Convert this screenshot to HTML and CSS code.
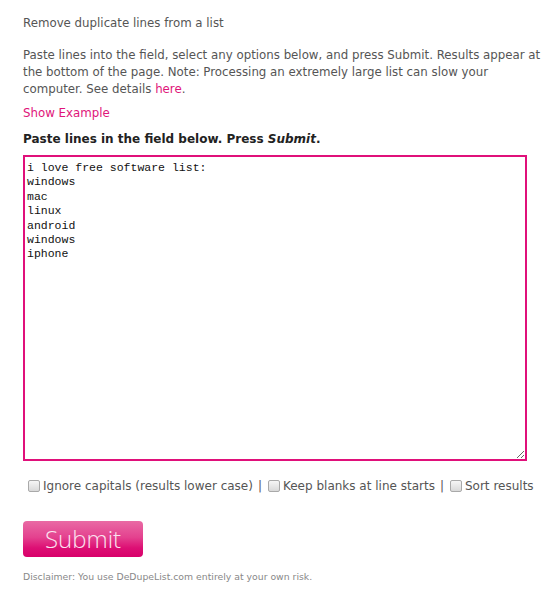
FILE: index.html
```html
<!DOCTYPE html>
<html>
<head>
<meta charset="utf-8">
<link rel="stylesheet" href="styles.css">
</head>
<body>
<div class="page">
  <h1 class="title">Remove duplicate lines from a list</h1>
  <p class="intro">Paste lines into the field, select any options below, and press Submit. Results appear at the bottom of the page. Note: Processing an extremely large list can slow your computer. See details <a href="#" class="link">here</a>.</p>
  <p class="example"><a href="#" class="link">Show Example</a></p>
  <p class="heading">Paste lines in the field below. Press <em>Submit</em>.</p>
  <textarea class="field" spellcheck="false">i love free software list:
windows
mac
linux
android
windows
iphone</textarea>
  <div class="options">
    <label class="opt"><input type="checkbox" class="box">Ignore capitals (results lower case)</label><span class="sep">|</span>
    <label class="opt"><input type="checkbox" class="box">Keep blanks at line starts</label><span class="sep">|</span>
    <label class="opt"><input type="checkbox" class="box">Sort results</label>
  </div>
  <button class="submit">Submit</button>
  <p class="disclaimer">Disclaimer: You use DeDupeList.com entirely at your own risk.</p>
</div>
</body>
</html>
```
FILE: styles.css
```css
html, body {
  margin: 0;
  padding: 0;
  background: #ffffff;
}
body {
  font-family: "DejaVu Sans", Verdana, sans-serif;
  font-size: 11.8px;
  color: #555555;
}
.page {
  box-sizing: border-box;
  width: 550px;
  padding: 15px 0 0 23px;
}
.title {
  margin: 0;
  font-size: 11.8px;
  font-weight: normal;
  line-height: 17px;
  color: #555555;
}
.intro {
  margin: 15px 0 0 0;
  line-height: 17px;
}
.link {
  color: #e0157a;
  text-decoration: none;
}
.example {
  margin: 7px 0 0 0;
  line-height: 17px;
}
.heading {
  margin: 9px 0 0 0;
  font-weight: bold;
  font-size: 12px;
  color: #222222;
  line-height: 17px;
}
.heading em {
  font-style: italic;
}
.field {
  display: block;
  box-sizing: border-box;
  margin: 7px 0 0 0;
  width: 504px;
  height: 306px;
  border: 2px solid #e0107a;
  padding: 4px 2px 2px 2px;
  font-family: "Liberation Mono", "Courier New", monospace;
  font-size: 11.5px;
  line-height: 14.4px;
  color: #111111;
  outline: none;
  background: #ffffff;
  resize: both;
}
.options {
  display: flex;
  align-items: center;
  white-space: nowrap;
  margin: 17px 0 0 5px;
  font-size: 12px;
  line-height: 17px;
  color: #555555;
}
.opt {
  display: flex;
  align-items: center;
}
.box {
  appearance: none;
  -webkit-appearance: none;
  box-sizing: border-box;
  margin: 0 3px 1px 0;
  width: 12px;
  height: 12px;
  border: 1px solid #a9a9a9;
  border-radius: 2px;
  background: linear-gradient(to bottom, #f6f6f6, #d9d9d9);
}
.sep {
  margin: 0 6px 0 5px;
}
.submit {
  display: block;
  margin: 26px 0 0 0;
  width: 120px;
  height: 36px;
  border: none;
  border-radius: 4px;
  background: linear-gradient(to bottom, #e96aa4 0%, #e4428f 45%, #dd0f74 75%, #d8006a 100%);
  color: #fbe3ef;
  font-family: "Open Sans", sans-serif;
  font-weight: 300;
  font-size: 24px;
  padding: 0 0 2px 0;
  text-align: center;
}
.disclaimer {
  margin: 13px 0 0 0;
  font-size: 9.3px;
  line-height: 14px;
  color: #888888;
}
```
